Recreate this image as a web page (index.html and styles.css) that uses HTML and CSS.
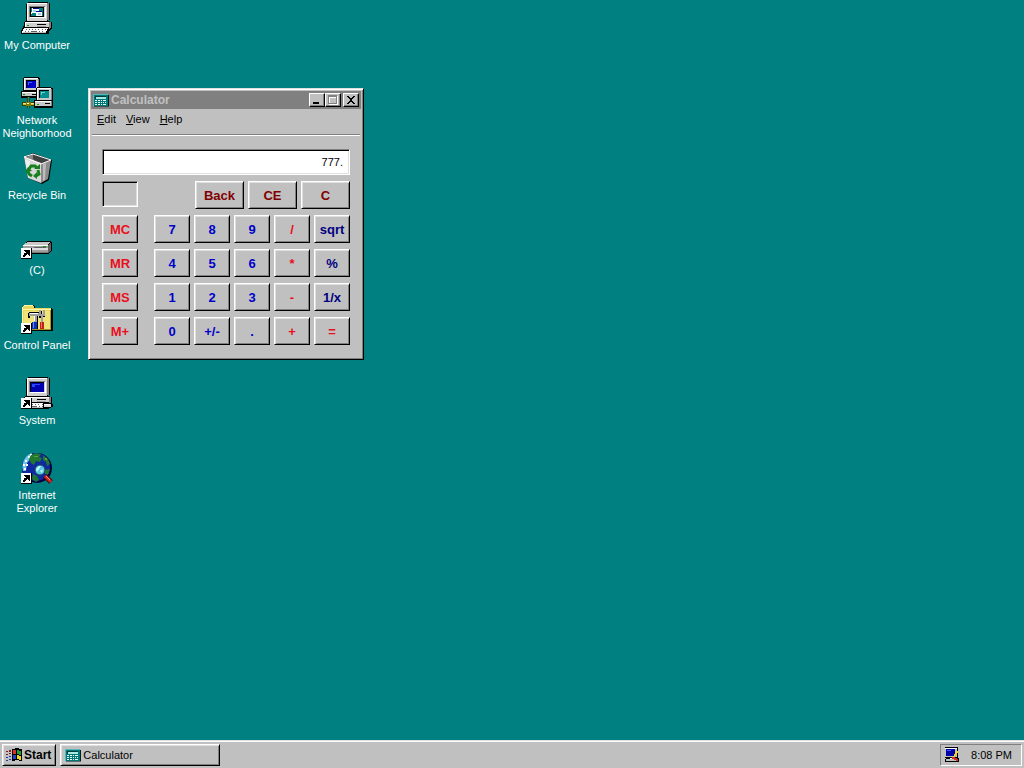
FILE: index.html
```html
<!DOCTYPE html>
<html lang="en">
<head>
    <meta charset="UTF-8">
    <meta name="viewport" content="width=device-width, initial-scale=1.0">
    <title>Desktop</title>
    <link rel="stylesheet" href="styles.css">
</head>
<body>
    <!-- Shared icon parts -->
    <svg class="sprites" aria-hidden="true">
        <symbol id="shortcut" viewBox="0 0 11 11">
            <path fill="#000" d="M0 0h11v11H0z"/>
            <path fill="#fff" d="M0 0h10v10H0z"/>
            <path fill="#000" d="M3 2h6v6H8V7H7V6H6v1H5v1H4v1H2V7h1V5h2V4H4V3H3z"/>
        </symbol>
        <symbol id="pc" viewBox="0 0 32 32">
            <path fill="#000" d="M7 0h20v1h2v17h-2v2H7v-1H5V2h2z"/>
            <path fill="#808080" d="M26 1h2v17h-2z"/>
            <path fill="#d0d0d0" d="M6 1h20v18H6z"/>
            <path fill="#fff" d="M6 1h20v1H7v16H6z"/>
            <path fill="#808080" d="M8 4h16v1H9v10H8z"/>
            <path fill="#fff" d="M9 15h15V5h1v11H9z"/>
            <path fill="#000" d="M9 5h14v10H9z"/>
            <path fill="#000" d="M4 19h25v1h2v7h-1v1h-1v1h-1v3H0v-4h1v-2h1v-2h1v-4h1z"/>
            <path fill="#808080" d="M28 20h2v6h-1v1h-1z"/>
            <path fill="#d0d0d0" d="M4 20h24v5H4z"/>
            <path fill="#fff" d="M4 20h24v1H4zM4 21h1v4H4z"/>
            <path fill="#000" d="M16 22h9v1h-9z"/>
            <path fill="#a0a0a0" d="M16 24h9v1h-9z"/>
            <path fill="#00a000" d="M6 23h2v1H6z"/>
            <path fill="#fff" d="M3 26h24v1h-1v2h-1v2H1v-2h1v-2h1z"/>
            <path fill="#606060" d="M5 27h1v1H5zm3 0h1v1H8zm3 0h1v1h-1zm3 0h1v1h-1zm3 0h1v1h-1zm4 0h1v1h-1zm3 0h1v1h-1zM4 29h1v1H4zm3 0h1v1H7zm3 0h6v1h-6zm8 0h1v1h-1zm3 0h1v1h-1z"/>
            <path fill="#c0c0c0" d="M2 30h23v1H2z"/>
        </symbol>
        <symbol id="calc" viewBox="0 0 16 13">
            <path fill="#001c1c" d="M1 1h15v12H1z"/>
            <path fill="#007878" d="M0 0h15v12H0z"/>
            <path fill="#58b8b8" d="M0 0h15v1H1v11H0z"/>
            <path fill="#003c3c" d="M2 2h11v1H3v2H2z"/>
            <path fill="#a8e8e0" d="M3 3h10v2H3z"/>
            <path fill="#e8ffff" d="M2 6h2v1H2zm3 0h2v1H5zm3 0h1v1H8zm2 0h3v1h-3zM2 8h2v1H2zm3 0h2v1H5zm3 0h1v1H8zm2 0h1v1h-1zm2 0h1v1h-1zM2 10h2v1H2zm3 0h2v1H5zm3 0h1v1H8zm2 0h3v1h-3z"/>
        </symbol>
    </svg>

    <main class="desktop">
        <nav class="icons" aria-label="Desktop icons">
            <a class="icon" href="#">
                <svg viewBox="0 0 32 32">
                    <use href="#pc"/>
                    <path fill="#008080" d="M10 6h12v8H10z"/>
                    <path fill="#fff" d="M11 6h7v5h-7zM15 9h6v5h-6z"/>
                    <path fill="#000080" d="M12 6h6v1h-6zM15 9h6v1h-6z"/>
                    <path fill="#8fd8f0" d="M12 8h3v2h-3zM17 11h3v2h-3z"/>
                    <path fill="#ffffa0" d="M10 10h1v2h-1z"/>
                </svg>
                <span>My Computer</span>
            </a>
            <a class="icon" href="#">
                <svg viewBox="0 0 32 32">
                    <path fill="#000" d="M3 0h15v1h1v12h2v8H0v-7h2V1h1z"/>
                    <path fill="#c8c8c8" d="M3 1h14v12H3zM1 15h17v4H1z"/>
                    <path fill="#fff" d="M3 1h14v1H4v11H3zM1 15h17v1H1z"/>
                    <path fill="#808080" d="M17 2h1v11h-1zM18 14h2v5h-2z"/>
                    <path fill="#000" d="M5 3h10v8H5zM11 17h5v1h-5z"/>
                    <path fill="#0000c8" d="M6 4h9v7H6z"/>
                    <path fill="#3c5cff" d="M7 5h4v1H7zM7 6h1v2H7z"/>
                    <path fill="#00a000" d="M2 17h2v1H2z"/>
                    <path fill="#404000" d="M6 20h3v11H6zM1 25h13v4H1z"/>
                    <path fill="#c0c020" d="M2 26h11v2H2z"/>
                    <path fill="#e8e880" d="M2 26h11v1H2z"/>
                    <path fill="#00a0a0" d="M7 20h1v11H7z"/>
                    <path fill="#808000" d="M5 25h5v4H5z"/>
                    <path fill="#fff" d="M6 26h2v1H6z"/>
                    <path fill="#000" d="M16 10h14v1h2v20H13v-8h2V11h1z"/>
                    <path fill="#c8c8c8" d="M16 11h14v12H16zM14 25h16v4H14z"/>
                    <path fill="#fff" d="M16 11h14v1H17v11h-1zM14 24h16v1H14z"/>
                    <path fill="#808080" d="M30 12h1v11h-1zM30 24h1v5h-1z"/>
                    <path fill="#000" d="M18 13h10v8H18zM24 26h5v1h-5z"/>
                    <path fill="#009090" d="M19 14h9v7h-9z"/>
                    <path fill="#70d0c8" d="M20 15h4v1h-4zM20 16h1v2h-1z"/>
                    <path fill="#00a000" d="M16 27h2v1h-2z"/>
                </svg>
                <span>Network Neighborhood</span>
            </a>
            <a class="icon" href="#">
                <svg class="smooth" viewBox="0 0 32 32">
                    <path fill="#000" d="M12 1l19 7-3 20-7 4-14-6L3 5z"/>
                    <path fill="#565656" d="M12 2l17 6-9 4L4 6z"/>
                    <path fill="#888" d="M12 2l1 8-9-4z"/>
                    <path fill="#404040" d="M12 3l16 5-7 3-9-4z"/>
                    <path fill="#d8d8d8" d="M3 5l17 6v20L7 26z"/>
                    <path fill="#eee" d="M4 7l5 2v15l-2 1z"/>
                    <path fill="#8c8c8c" d="M20 12l10-4-3 19-7 4z"/>
                    <path fill="#bcbcbc" d="M22 12l3-1-1 17-2 1z"/>
                    <path fill="none" stroke="#fff" d="M3 5l9-3 18 6-10 4z"/>
                    <path fill="none" stroke="#16801c" stroke-width="3" d="M8 17l2-3h4l2 2M17 18l1 4-3 2M11 24l-3-2-1-3"/>
                    <path fill="#16801c" d="M13 17h6v-5zM16 20v7l-4-3zM4 20l3-5 4 4z"/>
                </svg>
                <span>Recycle Bin</span>
            </a>
            <a class="icon" href="#">
                <svg viewBox="0 0 32 32">
                    <path fill="#000" d="M6 14h24v1h1v9h-1v1h-1v1h-1v1H2v-9h1v-1h1v-1h1v-1h1z"/>
                    <path fill="#c8c8c8" d="M6 15h23v1h-1v1h-1v1H3v-1h1v-1h2z"/>
                    <path fill="#a0a0a0" d="M2 18h25v8H2z"/>
                    <path fill="#fff" d="M2 18h25v1H2z"/>
                    <path fill="#dfdfdf" d="M2 21h25v2H2z"/>
                    <path fill="#606060" d="M27 18h1v-1h1v-1h1v8h-1v1h-1v1h-1z"/>
                    <path fill="#606060" d="M13 20h12v1H13z"/>
                    <path fill="#00a000" d="M22 19h3v1h-3z"/>
                    <path fill="#787878" d="M2 25h25v1H2z"/>
                    <use href="#shortcut" x="0" y="21" width="11" height="11"/>
                </svg>
                <span>(C)</span>
            </a>
            <a class="icon" href="#">
                <svg viewBox="0 0 32 32">
                    <path fill="#000" d="M3 3h10v1h1v2h17v1h1v22H2V5h1z"/>
                    <path fill="#e8d860" d="M1 5h1V4h1V3h9v1h1v2h17v22H1z"/>
                    <path fill="#fff8a8" d="M3 3h9v1H3zM1 5h1v22H1zM2 7h28v1H2z"/>
                    <path fill="#f0e478" d="M3 9h26v18H3z"/>
                    <path fill="#a89420" d="M29 8h1v20H2v-1h27z"/>
                    <path fill="#000" d="M8 10h10v1h2v5h-2v-2h-1v13h-4V14H9v2H7v-5h1z"/>
                    <path fill="#a0a0a0" d="M8 11h10v3H8zM13 13h3v7h-3z"/>
                    <path fill="#fff" d="M9 11h8v1H9zM13 14h1v5h-1z"/>
                    <path fill="#1030b8" d="M11 20h5v7h-5z"/>
                    <path fill="#6080f0" d="M12 20h1v6h-1z"/>
                    <path fill="#000" d="M19 9h2v3h1V8h2v7h-2v6h-2v-6h-1z"/>
                    <path fill="#a0a0a0" d="M18 8h2v4h2V8h2v6h-2v6h-2v-6h-2z"/>
                    <path fill="#c02020" d="M19 20h4v7h-4z"/>
                    <path fill="#f07060" d="M20 20h1v6h-1z"/>
                    <use href="#shortcut" x="0" y="21" width="11" height="11"/>
                </svg>
                <span>Control Panel</span>
            </a>
            <a class="icon" href="#">
                <svg viewBox="0 0 32 32">
                    <use href="#pc"/>
                    <path fill="#0000b0" d="M10 6h13v9H10z"/>
                    <path fill="#2848ff" d="M11 7h8v1h-8zM11 8h3v2h-3z"/>
                    <path fill="#000" d="M22 26h8v1h2v3h-2v1h-8z"/>
                    <path fill="#d8d8d8" d="M23 27h7v3h-7z"/>
                    <path fill="#fff" d="M23 27h6v1h-6z"/>
                    <use href="#shortcut" x="0" y="21" width="11" height="11"/>
                </svg>
                <span>System</span>
            </a>
            <a class="icon" href="#">
                <svg class="smooth" viewBox="0 0 32 32">
                    <circle cx="16" cy="16" r="15" fill="#000040"/>
                    <circle cx="15" cy="15" r="14" fill="#1028a0"/>
                    <path fill="#70c8e8" d="M2 19C0 11 4 3 11 1l-1 5-4 5-1 8z"/>
                    <path fill="#fff" d="M4 8h2v2H4zM7 4h2v2H7zM2 12h2v2H2zM5 12h2v2H5zM9 2h2v2H9zM3 16h2v2H3z"/>
                    <path fill="#207830" d="M10 3l5-2 5 1-2 3 3 1-2 4-4-1-2 4-3-2-2-4zM22 3l5 4 2 5-3 2-1-4-3-2zM12 22l4 2 2 4-3 2-4-3zM24 18l5-1-2 6-3-1z"/>
                    <path fill="#60a040" d="M13 4h4v1h-4zM24 6h2v2h-2z"/>
                    <path stroke="#500000" stroke-width="5" d="M24 24l6 6"/>
                    <path stroke="#d02828" stroke-width="3" d="M24 24l6 6"/>
                    <path stroke="#ff9080" d="M25 24l4 4"/>
                    <circle cx="19" cy="18" r="5" fill="#58c8e0" stroke="#204860"/>
                    <path fill="#c8f8ff" d="M15 17l3-3h2l-4 6zM19 19l3-2-1 4z"/>
                    <use href="#shortcut" x="0" y="21" width="11" height="11"/>
                </svg>
                <span>Internet Explorer</span>
            </a>
        </nav>

        <section class="window" aria-label="Calculator">
            <header class="title-bar">
                <svg class="small-icon" viewBox="0 0 16 13"><use href="#calc"/></svg>
                <h1>Calculator</h1>
                <div class="title-buttons">
                    <button class="title-btn" aria-label="Minimize">
                        <svg viewBox="0 0 12 10"><path d="M2 7h6v2H2z"/></svg>
                    </button>
                    <button class="title-btn" aria-label="Maximize" disabled>
                        <svg viewBox="0 0 12 10"><path fill="#fff" d="M2 1h9v9H2zM3 3v6h7V3z" fill-rule="evenodd"/><path fill="#808080" d="M1 0h9v9H1zM2 2v6h7V2z" fill-rule="evenodd"/></svg>
                    </button>
                    <button class="title-btn close" aria-label="Close">
                        <svg viewBox="0 0 12 10"><path d="M2 1h2v1h1v1h2V2h1V1h2v1H9v1H8v1H7v2h1v1h1v1h1v1H8V8H7V7H5v1H4v1H2V8h1V7h1V6h1V4H4V3H3V2H2z"/></svg>
                    </button>
                </div>
            </header>
            <nav class="menu">
                <button><u>E</u>dit</button>
                <button><u>V</u>iew</button>
                <button><u>H</u>elp</button>
            </nav>
            <div class="calculator">
                <input class="display" type="text" value="777." aria-label="Result" readonly>
                <div class="top-row">
                    <output class="memory" aria-label="Memory"></output>
                    <div class="clear-keys">
                        <button class="key clear">Back</button>
                        <button class="key clear">CE</button>
                        <button class="key clear">C</button>
                    </div>
                </div>
                <div class="keys">
                    <div class="memory-keys">
                        <button class="key red">MC</button>
                        <button class="key red">MR</button>
                        <button class="key red">MS</button>
                        <button class="key red">M+</button>
                    </div>
                    <div class="number-keys">
                        <button class="key">7</button>
                        <button class="key">8</button>
                        <button class="key">9</button>
                        <button class="key red">/</button>
                        <button class="key navy">sqrt</button>
                        <button class="key">4</button>
                        <button class="key">5</button>
                        <button class="key">6</button>
                        <button class="key red">*</button>
                        <button class="key navy">%</button>
                        <button class="key">1</button>
                        <button class="key">2</button>
                        <button class="key">3</button>
                        <button class="key red">-</button>
                        <button class="key navy">1/x</button>
                        <button class="key">0</button>
                        <button class="key">+/-</button>
                        <button class="key">.</button>
                        <button class="key red">+</button>
                        <button class="key red">=</button>
                    </div>
                </div>
            </div>
        </section>
    </main>

    <footer class="taskbar">
        <button class="task-btn start">
            <svg class="small-icon" viewBox="0 0 16 14">
                <path fill="#000" d="M6 1h3V0h4v1h3v12h-3v-1H9v1H6z"/>
                <path fill="#802020" d="M3 2h2v2H3zM0 3h2v1H0zM3 5h2v1H3zM0 6h2v1H0z"/>
                <path fill="#2040a0" d="M3 8h2v1H3zM0 9h2v1H0zM3 11h2v1H3zM0 12h2v1H0z"/>
                <path fill="#e03020" d="M7 2h3v4H7z"/>
                <path fill="#20a030" d="M11 2h2v1h2v4h-2V6h-2z"/>
                <path fill="#2040d0" d="M7 7h3v4H7z"/>
                <path fill="#f0d820" d="M11 7h2v1h2v4h-2v-1h-2z"/>
            </svg>
            <span>Start</span>
        </button>
        <button class="task-btn app">
            <svg class="small-icon" viewBox="0 0 16 13"><use href="#calc"/></svg>
            <span>Calculator</span>
        </button>
        <div class="tray">
            <svg class="tray-icon" viewBox="0 0 16 16">
                <path fill="#000" d="M1 0h13v11h1v4H1v-3h1v-1H1z"/>
                <path fill="#c0c0c0" d="M1 1h12v9H1zM2 12h11v2H2z"/>
                <path fill="#fff" d="M1 1h12v1H1z"/>
                <path fill="#0000a8" d="M2 2h9v7H2z"/>
                <path fill="#3858ff" d="M3 3h4v1H3z"/>
                <path fill="#f0d820" d="M12 4h2v2h-1v2h-2v2H9V9h1V7h1V5h1z"/>
                <path fill="#d03020" d="M8 10h3v1h2v1h1v2h-2v-1h-2v-1H8z"/>
                <path fill="#fff" d="M6 11h2v1H6z"/>
            </svg>
            <time>8:08 PM</time>
        </div>
    </footer>
</body>
</html>
```

FILE: styles.css
```css
* {
    box-sizing: border-box;
}

body {
    margin: 0;
    min-height: 100vh;
    display: flex;
    flex-direction: column;
    background: #008080;
    color: #000;
    font-family: "Liberation Sans", Arial, sans-serif;
    font-size: 11px;
    line-height: 13px;
}

button {
    margin: 0;
    padding: 0;
    border: none;
    background: #c0c0c0;
    color: inherit;
    font: inherit;
}

svg {
    display: block;
    flex: none;
    shape-rendering: crispEdges;
}

.smooth {
    shape-rendering: auto;
}

.sprites {
    position: absolute;
    width: 0;
    height: 0;
}

.desktop {
    position: relative;
    flex: 1;
}

/* Desktop icons */
.icons {
    display: grid;
    grid-template-columns: 74px;
    grid-auto-rows: 75px;
    padding-top: 2px;
}

.icon {
    display: flex;
    flex-direction: column;
    align-items: center;
    gap: 5px;
    color: #fff;
    text-align: center;
    text-decoration: none;
}

.icon svg {
    width: 32px;
    height: 32px;
}

/* Calculator window */
.window {
    position: absolute;
    top: 88px;
    left: 88px;
    padding: 1px;
    background: #c0c0c0;
    border: 1px solid;
    border-color: #dfdfdf #000 #000 #dfdfdf;
    box-shadow: inset 1px 1px #fff, inset -1px -1px #808080;
}

.title-bar {
    display: flex;
    align-items: center;
    height: 18px;
    margin: 1px 1px 0;
    padding: 0 2px;
    background: #808080;
    color: #c0c0c0;
}

.title-bar h1 {
    flex: 1;
    margin: 0 0 0 2px;
    font-size: 12px;
}

.small-icon {
    width: 16px;
    height: 14px;
}

.title-buttons {
    display: flex;
}

.title-btn {
    width: 16px;
    height: 14px;
    padding: 1px;
    border: 1px solid;
    border-color: #fff #000 #000 #fff;
    box-shadow: inset -1px -1px #808080;
}

.title-btn.close {
    margin-left: 2px;
}

.title-btn svg {
    width: 12px;
    height: 10px;
}

.menu {
    display: flex;
    height: 26px;
    margin: 0 2px;
    padding-bottom: 5px;
    border-bottom: 1px solid #808080;
    box-shadow: 0 1px #fff;
}

.menu button {
    padding: 0 5px;
    background: none;
}

.calculator {
    display: flex;
    flex-direction: column;
    gap: 6px;
    padding: 14px 12px 13px;
}

.display {
    width: 100%;
    height: 26px;
    padding: 0 6px;
    background: #fff;
    border: 1px solid;
    border-color: #808080 #fff #fff #808080;
    box-shadow: inset 1px 1px #000, inset -1px -1px #dfdfdf;
    color: #000;
    font: inherit;
    text-align: right;
}

.top-row {
    display: flex;
    justify-content: space-between;
}

.memory {
    width: 36px;
    height: 26px;
    border: 1px solid;
    border-color: #808080 #fff #fff #808080;
    box-shadow: inset 1px 1px #000, inset -1px -1px #dfdfdf;
}

.clear-keys {
    display: flex;
    gap: 4px;
}

.keys {
    display: flex;
    gap: 16px;
}

.memory-keys,
.number-keys {
    display: grid;
    grid-template-columns: 36px;
    gap: 6px 4px;
}

.number-keys {
    grid-template-columns: repeat(5, 36px);
}

.key {
    height: 28px;
    border: 1px solid;
    border-color: #fff #000 #000 #fff;
    box-shadow: inset 1px 1px #dfdfdf, inset -1px -1px #808080;
    color: #0000c8;
    font-size: 13px;
    font-weight: bold;
}

.key.clear {
    width: 49px;
    color: #800000;
}

.key.red {
    color: #e8101c;
}

.key.navy {
    color: #000080;
}

/* Taskbar */
.taskbar {
    display: flex;
    gap: 4px;
    height: 28px;
    padding: 3px 2px 2px;
    background: #c0c0c0;
    border-top: 1px solid #dfdfdf;
    box-shadow: inset 0 1px #fff;
}

.task-btn {
    display: flex;
    align-items: center;
    gap: 2px;
    padding: 0 4px;
    border: 1px solid;
    border-color: #fff #000 #000 #fff;
    box-shadow: inset 1px 1px #dfdfdf, inset -1px -1px #808080;
}

.start {
    padding: 0 4px 0 3px;
    font-size: 12px;
    font-weight: bold;
}

.app {
    width: 160px;
}

.tray {
    display: flex;
    align-items: center;
    gap: 11px;
    margin-left: auto;
    padding: 0 9px 0 3px;
    border: 1px solid;
    border-color: #808080 #fff #fff #808080;
}

.tray-icon {
    width: 16px;
    height: 16px;
}
```
